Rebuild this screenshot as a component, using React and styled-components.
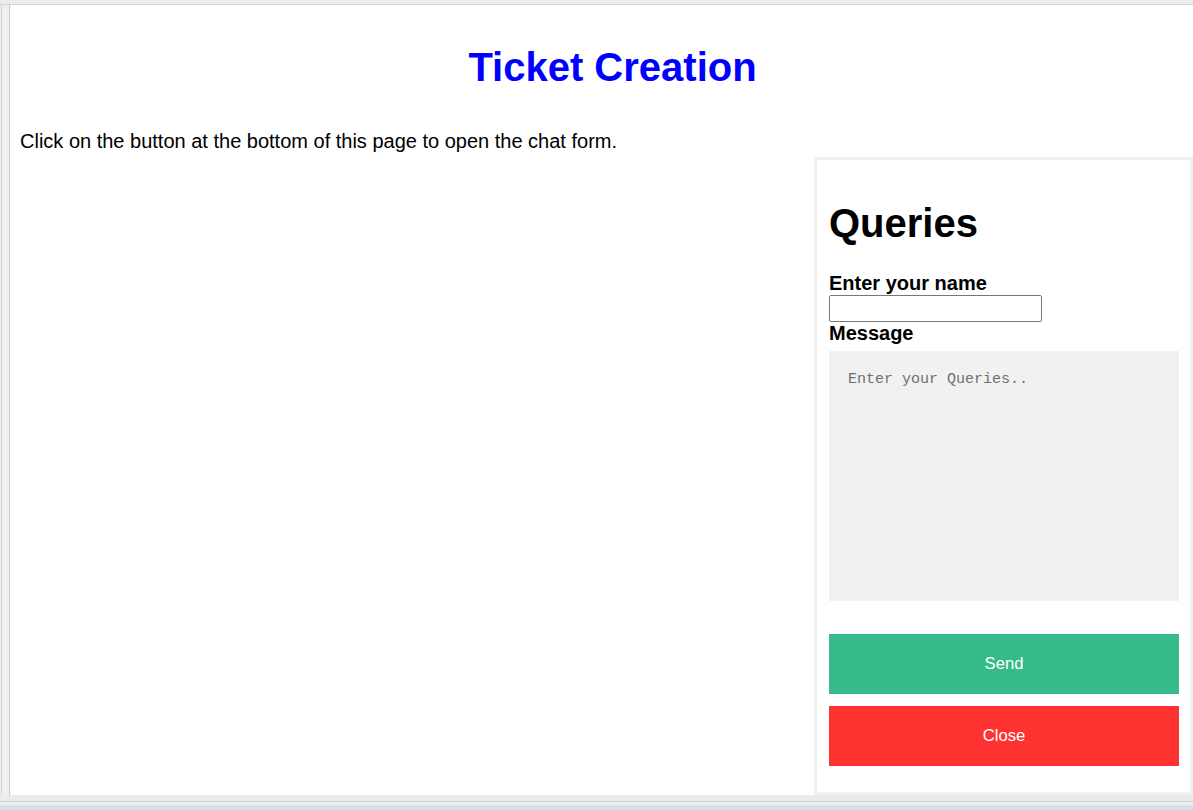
import styled, { createGlobalStyle } from "styled-components";

const GlobalStyle = createGlobalStyle`
  html, body {
    margin: 0;
    padding: 0;
  }
  body {
    font-family: "Liberation Sans", Arial, sans-serif;
    color: #000;
  }
`;

const Screen = styled.div`
  display: flex;
  flex-direction: column;
  height: 100vh;
  background: #f0f0f0;
  overflow: hidden;
`;

const TopEdge = styled.div`
  height: 4px;
  flex-shrink: 0;
  background: #ececec;
  border-bottom: 1px solid #d2d2d2;
`;

const Middle = styled.div`
  flex: 1;
  display: flex;
  min-height: 0;
`;

const LeftRail = styled.div`
  width: 7px;
  flex-shrink: 0;
  margin-left: 1px;
  background: #f0f0f0;
  border-left: 1px solid #d0d0d0;
  border-right: 1px solid #c9c9c9;
`;

const BottomEdge = styled.div`
  flex-shrink: 0;
  height: 6px;
  background: #ebebeb;
  border-bottom: 1px solid #cfcfcf;
`;

const Taskbar = styled.div`
  flex-shrink: 0;
  height: 8px;
  background: linear-gradient(#f0f0f0 0 3px, #d6e0e8 3px);
`;

const Viewport = styled.div`
  flex: 1;
  position: relative;
  background: #fff;
  overflow: hidden;
  padding: 0 10px;
`;

const Title = styled.h1`
  color: #0000ff;
  text-align: center;
  font-size: 40px;
  line-height: 46px;
  margin: 39px -22px 0 0;
`;

const Intro = styled.p`
  font-size: 20px;
  line-height: 23px;
  margin: 40px 0 0;
`;

const Popup = styled.div`
  position: absolute;
  right: 0;
  bottom: 0;
  width: 379px;
  box-sizing: border-box;
  border: 3px solid #f1f1f1;
  background: #fff;
`;

const Form = styled.form`
  padding: 10px 11px 26px 12px;
`;

const FormTitle = styled.h1`
  font-size: 40px;
  line-height: 46px;
  margin: 30px 0 26px;
`;

const Label = styled.label`
  display: block;
  font-size: 20px;
  font-weight: bold;
  line-height: 23px;
`;

const NameInput = styled.input`
  display: block;
  width: 213px;
  height: 27px;
  box-sizing: border-box;
  margin: 0;
  border: 1px solid #767676;
  border-radius: 2px;
  font-family: "Liberation Sans", Arial, sans-serif;
`;

const Message = styled.textarea`
  display: block;
  width: 100%;
  height: 250px;
  box-sizing: border-box;
  margin: 6px 0 33px;
  padding: 20px 19px 19px;
  border: none;
  background: #f1f1f1;
  resize: none;
  font-family: "Liberation Mono", monospace;
  font-size: 15px;

  &::placeholder {
    color: #707070;
  }
`;

const Button = styled.button`
  display: block;
  width: 100%;
  height: 60px;
  margin-bottom: 12px;
  border: none;
  color: #fff;
  font-family: "Liberation Sans", Arial, sans-serif;
  font-size: 16.67px;
  cursor: pointer;
  opacity: 0.8;
  background: ${(p) => (p.$cancel ? "#ff0000" : "#04aa6d")};

  &:last-child {
    margin-bottom: 0;
  }
`;

const App = () => {
  return (
    <Screen>
      <GlobalStyle />
      <TopEdge />
      <Middle>
        <LeftRail />
        <Viewport>
          <Title>Ticket Creation</Title>
          <Intro>Click on the button at the bottom of this page to open the chat form.</Intro>
          <Popup>
            <Form onSubmit={(e) => e.preventDefault()}>
              <FormTitle>Queries</FormTitle>
              <Label htmlFor="name">Enter your name</Label>
              <NameInput id="name" type="text" />
              <Label htmlFor="msg">Message</Label>
              <Message id="msg" placeholder="Enter your Queries.." />
              <Button type="submit">Send</Button>
              <Button type="button" $cancel>Close</Button>
            </Form>
          </Popup>
        </Viewport>
      </Middle>
      <BottomEdge />
      <Taskbar />
    </Screen>
  );
};

export default App;
